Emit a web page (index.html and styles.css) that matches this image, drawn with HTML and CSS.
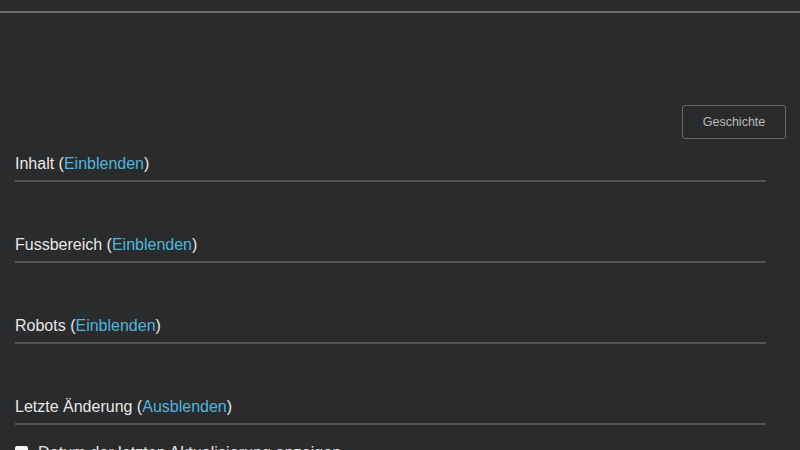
FILE: index.html
```html
<!DOCTYPE html>
<html lang="de">
<head>
<meta charset="utf-8">
<title>Seiteneinstellungen</title>
<link rel="stylesheet" href="styles.css">
</head>
<body>
<header class="topbar"></header>
<main class="content">
  <div class="toolbar">
    <button class="btn" type="button">Geschichte</button>
  </div>
  <section class="panel">
    <h2 class="panel-title">Inhalt (<a class="toggle" href="#">Einblenden</a>)</h2>
  </section>
  <section class="panel">
    <h2 class="panel-title">Fussbereich (<a class="toggle" href="#">Einblenden</a>)</h2>
  </section>
  <section class="panel">
    <h2 class="panel-title">Robots (<a class="toggle" href="#">Einblenden</a>)</h2>
  </section>
  <section class="panel">
    <h2 class="panel-title">Letzte Änderung (<a class="toggle" href="#">Ausblenden</a>)</h2>
    <label class="check-row"><span class="check-box"></span><span class="check-label">Datum der letzten Aktualisierung anzeigen</span></label>
  </section>
</main>
</body>
</html>
```
FILE: styles.css
```css
html, body {
  margin: 0;
  padding: 0;
  background: #2a2b2d;
  height: 100%;
  overflow: hidden;
}
body {
  font-family: "Liberation Sans", Arial, sans-serif;
  color: #e6e6e6;
}
.topbar {
  height: 11px;
  border-bottom: 2px solid #68696b;
}
.content {
  padding: 0 14px 0 15px;
}
.toolbar {
  display: flex;
  justify-content: flex-end;
  margin-top: 92px;
  margin-bottom: 13px;
}
.btn {
  width: 104px;
  height: 34px;
  background: transparent;
  border: 1px solid #67686a;
  border-radius: 3px;
  color: #b9b9b9;
  font-family: "Liberation Sans", Arial, sans-serif;
  font-size: 12.5px;
  padding: 0;
}
.panel {
  margin-right: 20px;
  margin-bottom: 51px;
}
.panel-title {
  margin: 0;
  font-size: 16px;
  font-weight: normal;
  line-height: 20px;
  padding-top: 2px;
  padding-bottom: 6px;
  border-bottom: 2px solid #535456;
  color: #e8e8e8;
}
.toggle {
  color: #4fb6de;
  text-decoration: none;
}
.check-row {
  display: flex;
  align-items: center;
  gap: 10px;
  margin-top: 17px;
  font-size: 16.2px;
  line-height: 20px;
  color: #e6e6e6;
}
.check-box {
  width: 13px;
  height: 13px;
  background: #f4f4f4;
  border-radius: 2px;
  flex: none;
}
```
